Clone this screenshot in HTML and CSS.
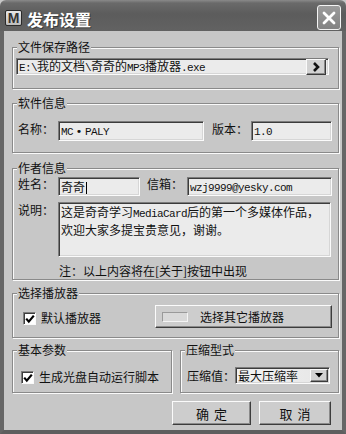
FILE: index.html
```html
<!DOCTYPE html>
<html lang="zh">
<head>
<meta charset="utf-8">
<title>发布设置</title>
<link rel="stylesheet" href="styles.css">
</head>
<body>
<div class="window">
  <div class="titlebar">
    <div class="app-icon">M</div>
    <div class="title">发布设置</div>
    <div class="close">
      <svg width="14" height="14" viewBox="0 0 14 14"><path d="M2 2 L12 12 M12 2 L2 12" stroke="#fff" stroke-width="2.8" stroke-linecap="round"/></svg>
    </div>
  </div>
  <div class="content">
    <div class="group g1">
      <span class="legend">文件保存路径</span>
      <div class="field path-field">
        <span class="ftext"><span class="lat">E:\</span>我的文档<span class="lat">\</span>奇奇的<span class="lat">MP3</span>播放器<span class="lat">.exe</span></span>
        <span class="mini-btn browse"><svg width="10" height="10" viewBox="0 0 10 10"><polyline points="3,1 7,5 3,9" fill="none" stroke="#111" stroke-width="2.6"/></svg></span>
      </div>
    </div>

    <div class="group g2">
      <span class="legend">软件信息</span>
      <div class="row">
        <span class="label">名称：</span>
        <div class="field f-name"><span class="ftext"><span class="lat">MC</span><span class="dot">•</span><span class="lat">PALY</span></span></div>
        <span class="label label2">版本：</span>
        <div class="field f-ver"><span class="ftext"><span class="lat">1.0</span></span></div>
      </div>
    </div>

    <div class="group g3">
      <span class="legend">作者信息</span>
      <div class="row">
        <span class="label">姓名：</span>
        <div class="field f-author"><span class="ftext">奇奇<span class="caret"></span></span></div>
        <span class="label label3">信箱：</span>
        <div class="field f-mail"><span class="ftext"><span class="lat">wzj9999@yesky.com</span></span></div>
      </div>
      <div class="row row-desc">
        <span class="label">说明：</span>
        <div class="field f-desc"><span class="ftext">这是奇奇学习<span class="lat">MediaCard</span>后的第一个多媒体作品，<br>欢迎大家多提宝贵意见，谢谢。</span></div>
      </div>
      <div class="note">注：以上内容将在[关于]按钮中出现</div>
    </div>

    <div class="group g4">
      <span class="legend">选择播放器</span>
      <div class="row row-center">
        <span class="checkbox"><svg width="10" height="10" viewBox="0 0 10 10"><polyline points="1.2,4.6 3.8,7.6 8.8,1.6" fill="none" stroke="#000" stroke-width="2.2"/></svg></span>
        <span class="check-label">默认播放器</span>
        <div class="button pick-btn"><span class="swatch"></span><span>选择其它播放器</span></div>
      </div>
    </div>

    <div class="pair">
      <div class="group g5">
        <span class="legend">基本参数</span>
        <div class="row row-center">
          <span class="checkbox"><svg width="10" height="10" viewBox="0 0 10 10"><polyline points="1.2,4.6 3.8,7.6 8.8,1.6" fill="none" stroke="#000" stroke-width="2.2"/></svg></span>
          <span class="check-label">生成光盘自动运行脚本</span>
        </div>
      </div>
      <div class="group g6">
        <span class="legend">压缩型式</span>
        <div class="row row-center">
          <span class="label">压缩值：</span>
          <div class="field select"><span class="ftext">最大压缩率</span>
            <span class="mini-btn drop"><svg width="8" height="5" viewBox="0 0 8 5"><polygon points="0,0 8,0 4,4.5" fill="#000"/></svg></span>
          </div>
        </div>
      </div>
    </div>

    <div class="actions">
      <div class="button ok">确定</div>
      <div class="button cancel">取消</div>
    </div>
  </div>
</div>
</body>
</html>
```

FILE: styles.css
```css
* { box-sizing: border-box; }
html { background: #777; }
body {
  margin: 0;
  font-family: "Noto Sans CJK SC", "Noto Sans", sans-serif;
  font-size: 12px;
  color: #111;
}
.window {
  width: 346px;
  height: 434px;
  display: flex;
  flex-direction: column;
  background: #c7c7c7;
}
.titlebar {
  height: 31px;
  padding: 5px 5px 0 5px;
  display: flex;
  align-items: flex-start;
  background: linear-gradient(#8a8a8a 0, #6a6a6a 3px, #5c5c5c 14px, #626262 31px);
  border-radius: 6px 6px 0 0;
}
.app-icon {
  width: 17px;
  height: 16px;
  margin-top: 5px;
  border: 1px solid #2a2a2a;
  border-radius: 2px;
  background: linear-gradient(#e6e6e6, #bdbdbd);
  font-family: "Liberation Sans", sans-serif;
  font-weight: bold;
  font-size: 14px;
  line-height: 14px;
  text-align: center;
  color: #333;
}
.title {
  margin-left: 5px;
  margin-top: 4px;
  font-size: 16px;
  line-height: 20px;
  font-weight: bold;
  color: #fff;
  text-shadow: 1px 1px 0 #3a3a3a;
}
.close {
  margin-left: auto;
  width: 24px;
  height: 25px;
  border: 1px solid #f4f4f4;
  border-radius: 3px;
  background: linear-gradient(#9c9c9c, #838383);
  display: flex;
  align-items: center;
  justify-content: center;
}
.content {
  flex: 1;
  border: 4px solid #5e5e5e;
  border-top: 0;
  border-left-color: #666;
  border-right-color: #666;
  padding: 16px 3px 0 8px;
  display: flex;
  flex-direction: column;
}
.group {
  position: relative;
  border: 1px solid #8a8a8a;
  box-shadow: 1px 1px 0 #fafafa, inset 1px 1px 0 #fafafa;
}
.legend {
  position: absolute;
  top: -8px;
  left: 4px;
  padding: 0 1px;
  background: #c7c7c7;
  line-height: 14px;
  white-space: nowrap;
}
.row { display: flex; align-items: flex-start; }
.row-center { align-items: center; }
.label { width: 40px; line-height: 14px; white-space: nowrap; }

.field {
  position: relative;
  display: flex;
  align-items: center;
  background: #ebebeb;
  border: 1px solid;
  border-color: #7c7c7c #fbfbfb #fbfbfb #7c7c7c;
  box-shadow: inset 1px 1px 0 #3c3c3c, inset -1px -1px 0 #d6d6d6;
  padding-left: 2px;
  white-space: nowrap;
}
.ftext { line-height: 14px; }
.lat {
  font-family: "Liberation Mono", monospace;
  font-size: 11px;
  letter-spacing: -0.6px;
}
.dot {
  display: inline-block;
  width: 12px;
  text-align: center;
  font-family: "DejaVu Sans", sans-serif;
  font-size: 11px;
}
.caret {
  display: inline-block;
  width: 1px;
  height: 12px;
  background: #000;
  vertical-align: -2px;
  margin-left: 1px;
}
.mini-btn {
  position: absolute;
  display: flex;
  align-items: center;
  justify-content: center;
  background: #d2d2d2;
  border: 1px solid;
  border-color: #fafafa #3a3a3a #3a3a3a #fafafa;
  box-shadow: inset -1px -1px 0 #888;
}

/* group 1 */
.g1 { height: 42px; padding: 10px 9px 0 3px; }
.path-field { height: 17px; }
.browse { right: 2px; top: 0; width: 20px; height: 16px; }

/* group 2 */
.g2 { height: 50px; margin-top: 14px; padding: 17px 6px 0 5px; }
.g2 .label { margin-top: 1px; }
.f-name { width: 146px; height: 20px; }
.label2 { margin-left: 8px; width: 39px; }
.f-ver { width: 81px; height: 20px; }

/* group 3 */
.g3 { height: 112px; margin-top: 15px; padding: 8px 6px 0 5px; }
.f-author { width: 82px; height: 19px; }
.label3 { margin-left: 7px; }
.f-mail { width: 145px; height: 19px; }
.row-desc { margin-top: 6px; }
.row-desc .label { margin-top: 1px; }
.f-desc {
  width: 273px;
  height: 55px;
  align-items: flex-start;
  padding-top: 1px;
}
.f-desc .ftext { line-height: 15px; }
.note { margin: 7px 0 0 41px; line-height: 14px; }

/* group 4 */
.g4 { height: 45px; margin-top: 13px; padding: 11px 6px 0 10px; }
.checkbox {
  width: 13px;
  height: 13px;
  background: #fff;
  border: 1px solid;
  border-color: #7c7c7c #fafafa #fafafa #7c7c7c;
  box-shadow: inset 1px 1px 0 #3c3c3c;
  display: flex;
  align-items: center;
  justify-content: center;
  padding: 1px 0 0 1px;
}
.g4 .checkbox { margin-top: 4px; }
.check-label { margin-left: 5px; line-height: 14px; white-space: nowrap; }
.g4 .check-label { margin-top: 3px; }
.button {
  display: flex;
  align-items: center;
  justify-content: center;
  background: #cdcdcd;
  border: 1px solid;
  border-color: #fbfbfb #3c3c3c #3c3c3c #fbfbfb;
  box-shadow: inset -1px -1px 0 #8a8a8a;
  white-space: nowrap;
}
.pick-btn {
  margin-left: auto;
  width: 177px;
  height: 23px;
  justify-content: flex-start;
  padding-left: 6px;
}
.swatch {
  width: 26px;
  height: 10px;
  margin-right: 12px;
  background: #d9d9d9;
  border: 1px solid;
  border-color: #9a9a9a #f4f4f4 #f4f4f4 #9a9a9a;
}

/* bottom pair */
.pair { display: flex; gap: 8px; margin-top: 12px; }
.g5 { width: 160px; height: 43px; padding: 19px 0 0 8px; }
.g6 { flex: 1; height: 43px; padding: 16px 0 0 6px; }
.g6 .label { width: 48px; }
.select {
  width: 95px;
  height: 17px;
  background: linear-gradient(90deg, #f2f2f2, #e6e6e6);
}
.drop { right: 1px; top: 1px; width: 18px; height: 13px; }

/* dialog buttons */
.actions {
  display: flex;
  justify-content: flex-end;
  gap: 8px;
  margin-top: 8px;
  padding-right: 8px;
}
.actions .button {
  height: 24px;
  font-size: 13px;
  letter-spacing: 5px;
  padding-left: 5px;
}
.ok { width: 79px; }
.cancel { width: 72px; }
```
